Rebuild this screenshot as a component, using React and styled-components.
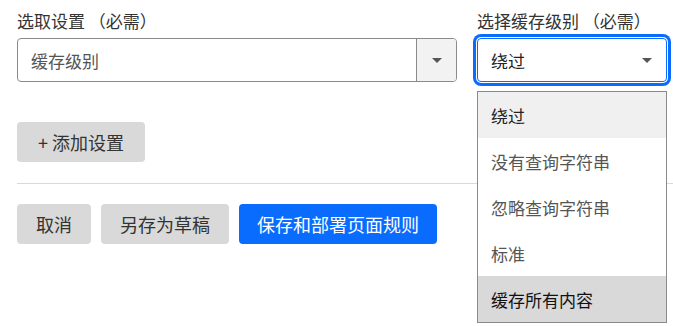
import React from "react";
import styled, { createGlobalStyle } from "styled-components";

const Global = createGlobalStyle`
  html, body { margin: 0; padding: 0; background: #fff; }
  body { font-family: "Noto Sans CJK SC", "Noto Sans", sans-serif; color: #333; }
  * { box-sizing: border-box; }
`;

const Page = styled.div`
  padding: 9px 0 0 17px;
  width: 673px;
  height: 326px;
  overflow: hidden;
`;

const FieldsRow = styled.div`
  display: grid;
  grid-template-columns: 440px 190px;
  column-gap: 20px;
`;

const Field = styled.div`
  position: relative;
  display: flex;
  flex-direction: column;
`;

const Label = styled.div`
  font-size: 17px;
  line-height: 24px;
  color: #333;
  margin-bottom: 5px;
  white-space: nowrap;
`;

const SelectBox = styled.div`
  height: 44px;
  display: flex;
  align-items: center;
  border: 1px solid ${(p) => (p.$focused ? "#0a6cff" : "#8a8a8a")};
  border-radius: 4px;
  background: #fff;
  box-shadow: ${(p) => (p.$focused ? "0 0 0 1px #fff, 0 0 0 4px #0a6cff" : "none")};
  overflow: hidden;
`;

const Value = styled.div`
  flex: 1;
  padding-left: 13px;
  font-size: 17px;
  color: ${(p) => (p.$muted ? "#555" : "#222")};
`;

const ArrowBox = styled.div`
  width: 40px;
  align-self: stretch;
  display: flex;
  align-items: center;
  justify-content: center;
  background: #f2f2f2;
  border-left: 1px solid #8a8a8a;
`;

const Caret = styled.span`
  width: 0;
  height: 0;
  border-left: 5px solid transparent;
  border-right: 5px solid transparent;
  border-top: 5px solid #555;
  margin-right: ${(p) => p.$inset || 0}px;
`;

const Menu = styled.ul`
  position: absolute;
  top: 82px;
  left: 0;
  width: 190px;
  margin: 0;
  padding: 0;
  list-style: none;
  border: 1px solid #8a8a8a;
  background: #fff;
  z-index: 2;
`;

const MenuItem = styled.li`
  height: 46px;
  display: flex;
  align-items: center;
  padding-left: 13px;
  font-size: 17px;
  color: ${(p) => (p.$state === "selected" ? "#222" : p.$state === "hover" ? "#111" : "#555")};
  background: ${(p) => (p.$state === "selected" ? "#f0f0f0" : p.$state === "hover" ? "#d9d9d9" : "#fff")};
`;

const AddButton = styled.button`
  margin-top: 40px;
  height: 40px;
  padding: 0 21px;
  border: none;
  border-radius: 4px;
  background: #d9d9d9;
  color: #333;
  font-family: inherit;
  font-size: 18px;
  align-self: flex-start;
`;

const Column = styled.div`
  display: flex;
  flex-direction: column;
`;

const Divider = styled.hr`
  margin: 21px 0 20px;
  border: none;
  border-top: 1px solid #d9d9d9;
  width: 656px;
`;

const Actions = styled.div`
  display: flex;
  gap: 10px;
`;

const Button = styled.button`
  height: 40px;
  padding: 0 ${(p) => (p.$primary ? 18 : 19)}px;
  border: none;
  border-radius: 4px;
  background: ${(p) => (p.$primary ? "#0a6cff" : "#d9d9d9")};
  color: ${(p) => (p.$primary ? "#fff" : "#333")};
  font-family: inherit;
  font-size: 18px;
`;

const options = [
  { label: "绕过", state: "selected" },
  { label: "没有查询字符串" },
  { label: "忽略查询字符串" },
  { label: "标准" },
  { label: "缓存所有内容", state: "hover" },
];

export default function App() {
  return (
    <>
      <Global />
      <Page>
        <Column>
          <FieldsRow>
            <Field>
              <Label>选取设置 （必需）</Label>
              <SelectBox>
                <Value $muted>缓存级别</Value>
                <ArrowBox>
                  <Caret />
                </ArrowBox>
              </SelectBox>
            </Field>
            <Field>
              <Label>选择缓存级别 （必需）</Label>
              <SelectBox $focused>
                <Value>绕过</Value>
                <Caret $inset={14} />
              </SelectBox>
              <Menu>
                {options.map((o) => (
                  <MenuItem key={o.label} $state={o.state}>
                    {o.label}
                  </MenuItem>
                ))}
              </Menu>
            </Field>
          </FieldsRow>
          <AddButton>+ 添加设置</AddButton>
          <Divider />
          <Actions>
            <Button>取消</Button>
            <Button>另存为草稿</Button>
            <Button $primary>保存和部署页面规则</Button>
          </Actions>
        </Column>
      </Page>
    </>
  );
}
